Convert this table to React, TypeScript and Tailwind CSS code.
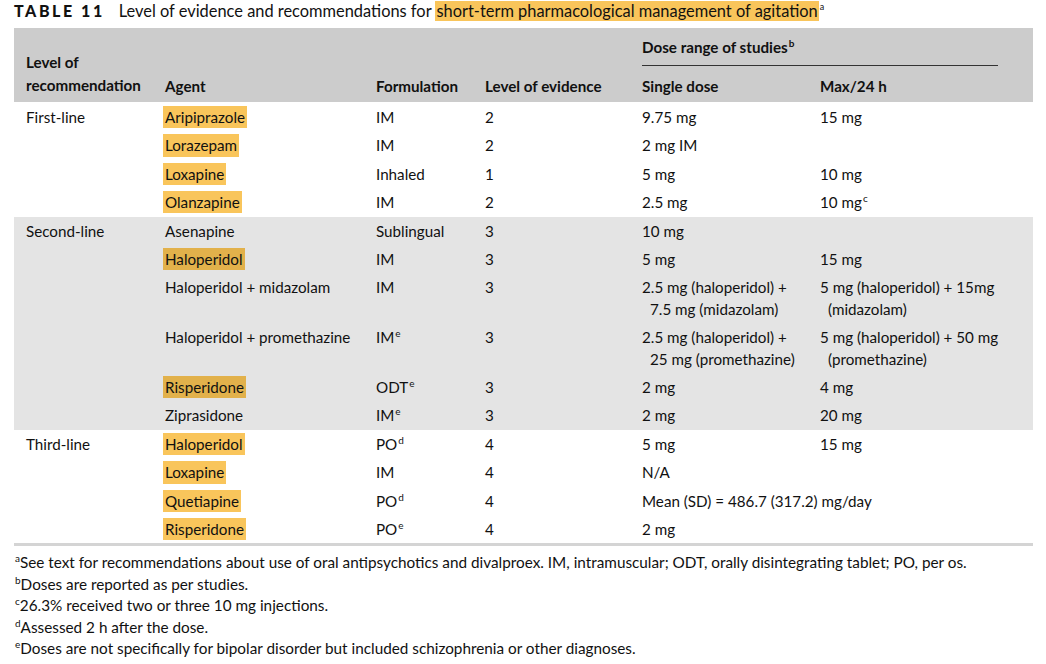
import React from "react";

const COLS = "grid grid-cols-[139px_211px_109px_157px_178px_178px_1fr]";

function Hl({ children, dark }: { children: React.ReactNode; dark?: boolean }) {
  return (
    <span className={`${dark ? "bg-[#e2b14b]" : "bg-[#f9c55b]"} -mx-[2px] px-[2px] inline-block`}>{children}</span>
  );
}

function Sup({ children }: { children: React.ReactNode }) {
  return <sup className="text-[10px] top-[-0.6em] ml-[1px]">{children}</sup>;
}

type Row = {
  level?: string;
  agent: React.ReactNode;
  form: React.ReactNode;
  ev: string;
  single: React.ReactNode;
  max?: React.ReactNode;
  wide?: boolean;
};

function Wrap({ lines }: { lines: string[] }) {
  return (
    <div className="whitespace-nowrap">
      {lines.map((l, i) => (
        <div key={i} className={i > 0 ? "pl-[8px]" : ""}>{l}</div>
      ))}
    </div>
  );
}

function Group({ rows, dark, lead, extra }: { rows: Row[]; dark?: boolean; lead: string; extra?: string }) {
  return (
    <div className={`${dark ? "bg-[#e4e4e4]" : "bg-white"} px-3 ${extra ?? ""}`}>
      {rows.map((r, i) => (
        <div key={i} className={`${COLS} py-[3px] ${lead}`}>
          <div>{r.level ?? ""}</div>
          <div>{r.agent}</div>
          <div>{r.form}</div>
          <div>{r.ev}</div>
          {r.wide ? (
            <div className="col-span-3">{r.single}</div>
          ) : (
            <>
              <div>{r.single}</div>
              <div>{r.max ?? ""}</div>
              <div />
            </>
          )}
        </div>
      ))}
    </div>
  );
}

export default function App() {
  const first: Row[] = [
    { level: "First-line", agent: <Hl>Aripiprazole</Hl>, form: "IM", ev: "2", single: "9.75 mg", max: "15 mg" },
    { agent: <Hl>Lorazepam</Hl>, form: "IM", ev: "2", single: "2 mg IM" },
    { agent: <Hl>Loxapine</Hl>, form: "Inhaled", ev: "1", single: "5 mg", max: "10 mg" },
    { agent: <Hl>Olanzapine</Hl>, form: "IM", ev: "2", single: "2.5 mg", max: <>10 mg<Sup>c</Sup></> },
  ];
  const second: Row[] = [
    { level: "Second-line", agent: "Asenapine", form: "Sublingual", ev: "3", single: "10 mg" },
    { agent: <Hl dark>Haloperidol</Hl>, form: "IM", ev: "3", single: "5 mg", max: "15 mg" },
    {
      agent: "Haloperidol + midazolam",
      form: "IM",
      ev: "3",
      single: <Wrap lines={["2.5 mg (haloperidol) +", "7.5 mg (midazolam)"]} />,
      max: <Wrap lines={["5 mg (haloperidol) + 15mg", "(midazolam)"]} />,
    },
    {
      agent: "Haloperidol + promethazine",
      form: <>IM<Sup>e</Sup></>,
      ev: "3",
      single: <Wrap lines={["2.5 mg (haloperidol) +", "25 mg (promethazine)"]} />,
      max: <Wrap lines={["5 mg (haloperidol) + 50 mg", "(promethazine)"]} />,
    },
    { agent: <Hl dark>Risperidone</Hl>, form: <>ODT<Sup>e</Sup></>, ev: "3", single: "2 mg", max: "4 mg" },
    { agent: "Ziprasidone", form: <>IM<Sup>e</Sup></>, ev: "3", single: "2 mg", max: "20 mg" },
  ];
  const third: Row[] = [
    { level: "Third-line", agent: <Hl>Haloperidol</Hl>, form: <>PO<Sup>d</Sup></>, ev: "4", single: "5 mg", max: "15 mg" },
    { agent: <Hl>Loxapine</Hl>, form: "IM", ev: "4", single: "N/A" },
    { agent: <Hl>Quetiapine</Hl>, form: <>PO<Sup>d</Sup></>, ev: "4", single: "Mean (SD) = 486.7 (317.2) mg/day", wide: true },
    { agent: <Hl>Risperidone</Hl>, form: <>PO<Sup>e</Sup></>, ev: "4", single: "2 mg" },
  ];

  return (
    <div className="w-[1046px] h-[664px] bg-white text-[#111] font-['Lato',sans-serif] text-[15.2px] overflow-hidden">
      <div className="pl-[14px] pr-[13px]">
        <div className="h-[28px] leading-[22px] text-[16.4px] whitespace-nowrap">
          <span className="font-black tracking-[0.16em] text-[16px] mr-[14px]">TABLE 11</span>
          <span>Level of evidence and recommendations for </span>
          <span className="bg-[#f9c55b] px-[1px] pb-[1px]">short-term pharmacological management of agitation</span>
          <sup className="text-[9px] top-[-0.8em] ml-[1px]">a</sup>
        </div>

        <div className="bg-[#cccccc] px-3 pt-[8px] pb-[5px] font-bold leading-[22px]">
          <div className={COLS}>
            <div className="row-span-2 self-end leading-[23px]">
              <div>Level of</div>
              <div>recommendation</div>
            </div>
            <div className="row-span-2 self-end">Agent</div>
            <div className="row-span-2 self-end">Formulation</div>
            <div className="row-span-2 self-end">Level of evidence</div>
            <div className="col-span-2 border-b border-[#333] pb-[7px]">
              Dose range of studies<Sup>b</Sup>
            </div>
            <div />
            <div className="pt-[9px]">Single dose</div>
            <div className="pt-[9px]">Max/24 h</div>
            <div />
          </div>
        </div>

        <div className="pt-[1px]">
          <Group rows={first} lead="leading-[22.25px]" extra="pb-[1px]" />
          <Group rows={second} dark lead="leading-[22px]" extra="pb-[1px]" />
          <Group rows={third} lead="leading-[22.25px]" />
        </div>
        <div className="border-b-[3px] border-[#d4d4d4]" />

        <div className="pt-[6px] leading-[21.5px] text-[15.3px]">
          <div><Sup>a</Sup>See text for recommendations about use of oral antipsychotics and divalproex. IM, intramuscular; ODT, orally disintegrating tablet; PO, per os.</div>
          <div><Sup>b</Sup>Doses are reported as per studies.</div>
          <div><Sup>c</Sup>26.3% received two or three 10 mg injections.</div>
          <div><Sup>d</Sup>Assessed 2 h after the dose.</div>
          <div><Sup>e</Sup>Doses are not specifically for bipolar disorder but included schizophrenia or other diagnoses.</div>
        </div>
      </div>
    </div>
  );
}
